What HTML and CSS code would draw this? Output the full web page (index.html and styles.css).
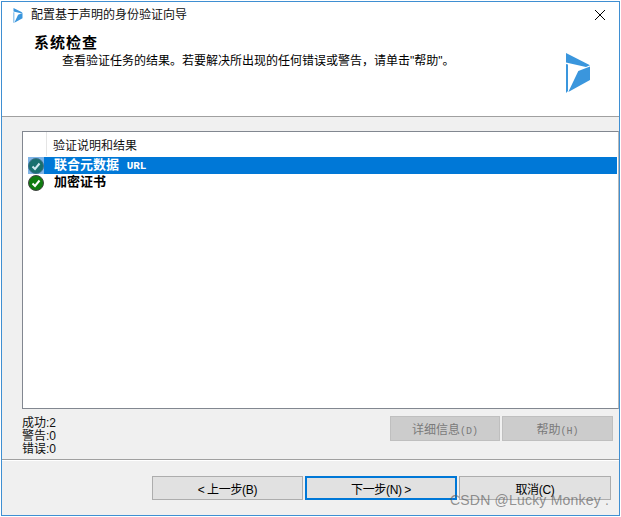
FILE: index.html
```html
<!DOCTYPE html>
<html lang="zh">
<head>
<meta charset="utf-8">
<title>配置基于声明的身份验证向导</title>
<link rel="stylesheet" href="styles.css">
</head>
<body>
<div class="window">
  <header class="top">
    <div class="titlebar">
      <svg class="app-icon" viewBox="0 0 24 40"><path class="logo" d="M0 0L24 12.300L20 14L0 9.500ZM0 11L2 11.500V38L0 40ZM12.300 18L24 13.500V27L2.300 39Z"/></svg>
      <span class="title">配置基于声明的身份验证向导</span>
      <svg class="close" viewBox="0 0 10 10"><path d="M0 0L10 10M10 0L0 10"/></svg>
    </div>
    <div class="banner">
      <div class="banner-text">
        <h1>系统检查</h1>
        <p>查看验证任务的结果。若要解决所出现的任何错误或警告&#xFF0C;请单击"帮助"。</p>
      </div>
      <svg class="logo-big" viewBox="0 0 24 40"><path class="logo" d="M0 0L24 12.300L20 14L0 9.500ZM0 11L2 11.500V38L0 40ZM12.300 18L24 13.500V27L2.300 39Z"/></svg>
    </div>
  </header>
  <main class="body">
    <section class="list">
      <div class="list-head"><span class="head-gap"></span><span class="head-label">验证说明和结果</span></div>
      <div class="row selected">
        <span class="icon-cell"><svg class="check" viewBox="0 0 16 16"><circle class="disc" cx="8" cy="8" r="7.500"/><path class="tick" d="M4.500 8.500L7 11L11.500 5.500"/></svg></span>
        <span class="row-label">联合元数据 <span class="latin">URL</span></span>
      </div>
      <div class="row">
        <span class="icon-cell"><svg class="check" viewBox="0 0 16 16"><circle class="disc" cx="8" cy="8" r="7.500"/><path class="tick" d="M4.500 8.500L7 11L11.500 5.500"/></svg></span>
        <span class="row-label">加密证书</span>
      </div>
    </section>
    <div class="status">
      <ul class="counts">
        <li>成功:2</li>
        <li>警告:0</li>
        <li>错误:0</li>
      </ul>
      <div class="actions">
        <button class="btn disabled wide-a" disabled>详细信息<span class="mnemonic">(D)</span></button>
        <button class="btn disabled wide-b" disabled>帮助<span class="mnemonic">(H)</span></button>
      </div>
    </div>
  </main>
  <footer class="foot">
    <button class="btn nav back">&lt; 上一步(B)</button>
    <button class="btn nav primary">下一步(N) &gt;</button>
    <button class="btn nav">取消(C)</button>
  </footer>
  <div class="watermark">CSDN @Lucky Monkey .</div>
</div>
</body>
</html>
```
FILE: styles.css
```css
* { box-sizing: border-box; }
html, body { margin: 0; padding: 0; background: #fff; }
body { width: 621px; height: 517px; padding: 1px; overflow: hidden; font-family: "Liberation Sans", "Noto Sans CJK SC", sans-serif; font-size: 12px; color: #000; }
.window { position: relative; width: 619px; height: 515px; border: 1px solid #3f8fd2; background: #f0f0f0; display: flex; flex-direction: column; }
.top { height: 115px; background: #fff; flex: none; border-bottom: 1px solid #a0a0a0; }
.titlebar { display: flex; align-items: center; height: 26px; padding: 0 11px; }
.app-icon { width: 10px; height: 15px; flex: none; }
.logo { fill: #3a96dd; }
.title { margin-left: 8px; flex: 1; line-height: 26px; color: #111; }
.close { width: 10px; height: 10px; fill: none; stroke: #000; stroke-width: 1; margin-right: 3px; }
.banner { display: flex; justify-content: space-between; padding: 0 29px 0 32px; }
.banner-text { flex: 1; }
h1 { margin: 4px 0 0; font-size: 15px; line-height: 21px; font-weight: 700; letter-spacing: 1px; }
p { margin: 0 0 0 28px; line-height: 16px; white-space: nowrap; }
.logo-big { width: 24px; height: 40px; margin-top: 25px; flex: none; }
.body { flex: 1; padding: 14px 0 0 20px; display: flex; flex-direction: column; }
.list { height: 278px; width: 597px; background: #fff; border: 1px solid #828790; border-right-color: #b8b8b8; flex: none; }
.list-head { display: flex; height: 25px; }
.head-gap { width: 24px; border-right: 1px solid #e5e5e5; height: 24px; }
.head-label { margin-left: 6px; line-height: 28px; color: #111; }
.row { display: flex; height: 17px; padding-left: 5px; align-items: center; font-weight: 700; font-size: 13px; }
.icon-cell { width: 16px; height: 17px; display: flex; align-items: center; flex: none; }
.check { width: 16px; height: 16px; display: block; }
.disc { fill: #107c10; stroke: #444; stroke-width: 1; }
.tick { fill: none; stroke: #fff; stroke-width: 2; }
.row-label { flex: 1; height: 17px; line-height: 15px; padding-left: 10px; }
.latin { font-family: "Liberation Mono", monospace; font-size: 11px; margin-left: 4px; }
.selected .icon-cell { background: #7fb4e6; }
.selected .disc { fill: #17706f; stroke: #3c6f87; }
.selected .tick { stroke: #cfe8f0; }
.selected .row-label { background: #0078d7; color: #fff; margin-right: 1px; }
.status { display: flex; justify-content: space-between; padding-right: 6px; flex: 1; }
.counts { list-style: none; margin: 8px 0 0; padding: 0; line-height: 13px; color: #111; }
.actions { display: flex; gap: 2px; margin-top: 7px; align-items: flex-start; }
.btn { font-family: inherit; font-size: 12px; height: 25px; padding: 0; border: 1px solid #adadad; background: #e1e1e1; color: #000; border-radius: 0; }
.disabled { background: #ccc; border-color: #bfbfbf; color: #7a7a7a; }
.mnemonic { font-family: "Liberation Mono", monospace; font-size: 10px; }
.wide-a { width: 110px; }
.wide-b { width: 111px; }
.foot { flex: none; height: 56px; border-top: 1px solid #a0a0a0; box-shadow: inset 0 1px 0 #fff; padding: 16px 8px 0 0; display: flex; justify-content: flex-end; gap: 2px; }
.nav { width: 152px; height: 24px; letter-spacing: -0.3px; word-spacing: -0.500px; }
.back { width: 151px; }
.primary { border: 2px solid #0078d7; }
.watermark { position: absolute; left: 448px; top: 490px; font-family: "Liberation Sans", sans-serif; font-size: 14px; letter-spacing: 0.2px; color: rgba(90, 90, 90, 0.65); white-space: nowrap; }
```
